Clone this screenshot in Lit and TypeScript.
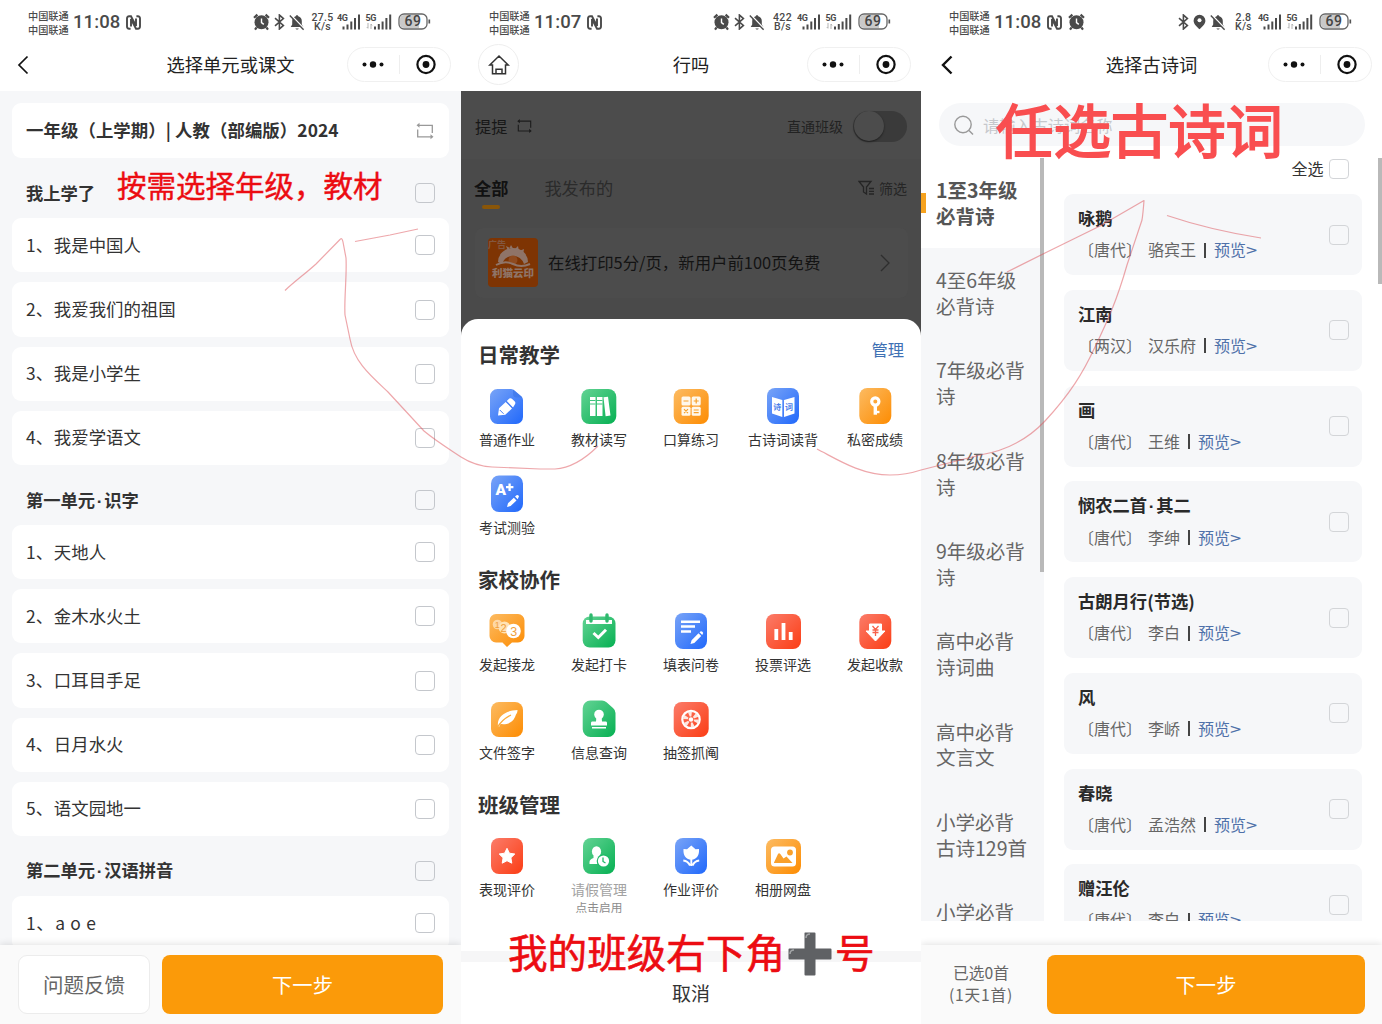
import { LitElement, html, svg, css } from "lit";
import { customElement } from "lit/decorators.js";

const alarm = html`<svg class="ic" width="17" height="18" viewBox="0 0 17 18"><circle cx="8.5" cy="9.3" r="7" fill="#4a4a4a"/><path d="M1 4.8 4.4 1.600M16 4.800 12.600 1.600M3.600 14.500 2 16.600M13.400 14.500 15 16.600" stroke="#4a4a4a" stroke-width="2.200" fill="none"/><path d="M8.500 5.600V9.600L10.800 11.400" stroke="#fff" stroke-width="1.400" fill="none"/></svg>`;
const bluetooth = html`<svg class="ic" width="11" height="16" viewBox="0 0 11 16"><path d="M1 4.2 9.4 11.4 5.4 15V1L9.4 4.6 1 11.8" stroke="#4a4a4a" stroke-width="1.6" fill="none"/></svg>`;
const muted = html`<svg class="ic" width="16" height="17" viewBox="0 0 16 17"><path d="M8 1.2c.8 0 1.2.5 1.3 1.1 2.200.6 3.500 2.400 3.500 4.600v3.600l1.500 2.500H1.700l1.500-2.500V6.900c0-2.200 1.300-4 3.500-4.600C6.800 1.700 7.200 1.200 8 1.200zM6.500 14.400h3.200c-.3 1.500-2.900 1.500-3.200 0z" fill="#4a4a4a"/><path d="M1.800 1 15.500 15.300" stroke="#fff" stroke-width="1.800"/><path d="M.8 1.400 14.600 15.800" stroke="#4a4a4a" stroke-width="1.400"/></svg>`;
const pin = html`<svg class="ic" width="13" height="16" viewBox="0 0 13 16"><path d="M6.500.8a5.900 5.900 0 0 1 5.900 5.900c0 3.600-3.700 6.400-5.900 8.500C4.300 13.100.6 10.300.6 6.700A5.900 5.900 0 0 1 6.500.8z" fill="#4a4a4a"/><circle cx="6.500" cy="6.300" r="2" fill="#fff"/></svg>`;
const nfc = html`<svg class="ic" width="15" height="15" viewBox="0 0 15 15"><path d="M4.600 13.800H3.200A2.300 2.300 0 0 1 1 11.500v-8A2.300 2.300 0 0 1 3.200 1.200H5L10 11V3.500M10.400 1.200h1.400A2.300 2.300 0 0 1 14 3.500v8a2.300 2.300 0 0 1-2.200 2.300H10L5 4v7.500" fill="none" stroke="#4a4a4a" stroke-width="1.900"/></svg>`;
const signals = html`<svg class="ic" width="55" height="18" viewBox="0 0 55 18" fill="#4a4a4a">
  <text x="0" y="8" class="net">4G</text><text x="28.500" y="8" class="net">5G</text>
  <path d="M5.500 13.500h2v3h-2zM9.500 11.500h2v5h-2zM13.300 8.500h2v8h-2zM17 5h2v11.500h-2zM21 1.500h2v15h-2zM37 13.500h2v3h-2zM40.800 11h2v5.500h-2zM44.600 8.500h2v8h-2zM48.400 5h2v11.500h-2zM52.200 1.500h2v15h-2z"/>
  <path d="M31 10v5M29.800 14l1.200 1.500M34 11v5M34 11l1 1.500" stroke="#aaa" fill="none" stroke-width=".9"/></svg>`;
const battery = html`<svg class="ic" width="33" height="18" viewBox="0 0 33 18"><rect x="1" y="1" width="28" height="15" rx="5" fill="#fff" stroke="#666" stroke-width="1.300"/><path d="M6 2H21V15H6A4 4 0 0 1 2 11V6A4 4 0 0 1 6 2z" fill="#c9c9c9"/><path d="M31.300 6.500v4" stroke="#555" stroke-width="1.700"/><text x="15" y="13.400" class="bat">69</text></svg>`;
const swap = (c: string) => html`<svg class="ic" width="20" height="20" viewBox="0 0 20 20" fill="none" stroke="${c}" stroke-width="1.300"><path d="M3 4.300H17.300V12M2.700 8.500V15.800H17"/><path d="M4.500 1.800 1.500 4.300 4.500 6.800zM15.500 13.300 18.500 15.800 15.500 18.300z" fill="${c}" stroke="none"/></svg>`;

const sq = (c: string, x: number, y: number, w: number, h: number) =>
  svg`<rect x=${x} y=${y} width=${w} height=${h} rx="8" fill="url(#${c})"/>`;

const art: Record<string, unknown> = {
  homework: svg`<path d="M10.500 3H24Q26 3 27.500 4.500L34.500 10.500Q36 12 36 14V31a7 7 0 0 1-7 7H10.500A7.500 7.500 0 0 1 3 30.500V10.500A7.500 7.500 0 0 1 10.500 3z" fill="url(#b)"/><path d="M26 3.500 35.500 11.500H29.500a3.500 3.500 0 0 1-3.500-3.500z" fill="#3f78e8" opacity=".7"/><path d="M11 29.500 12 22.300 18.700 16 25 22.400 18.300 28.700zM19.800 15 22.300 12.600Q23.800 11.600 25.200 12.900L27.800 15.600Q29 17.200 27.700 18.700L26 21.400z" fill="#fff"/><path d="M12.800 24 16.600 27.800M19.200 15.500 25.600 21.900" stroke="#4a80f5"/>`,
  books: svg`${sq("g", 2.3, 3, 35, 35)}<path d="M11 11h5.500v19H11zM18 11h5.500v19H18zM24.500 11.300 29 10.800 31.500 29.500 26.600 30.200z" fill="#fff"/><path d="M11 14.500h5.500M11 18h5.500M18 14.500h5.500M18 18h5.500" stroke="#3ec37c" stroke-width="1.200"/>`,
  calc: svg`${sq("o", 2.7, 3, 35, 35)}<g fill="#fff8ec"><rect x="10.500" y="10.500" width="9" height="9" rx="1.500"/><rect x="20.700" y="10.500" width="9" height="9" rx="1.500"/><rect x="10.500" y="20.700" width="9" height="9" rx="1.500"/><rect x="20.700" y="20.700" width="9" height="9" rx="1.500"/></g><path d="M12.500 15h5M22.700 15h5M25.200 12.500v5M13 23.200l4 4M17 23.200l-4 4M22.700 24h5M22.700 26.700h5" stroke="#f5a02c" stroke-width="1.200"/>`,
  poem: svg`${sq("b", 4, 2, 32, 36)}<path d="M9 11 19.300 14V31L9 27.500zM31.500 11 21 14V31L31.500 27.500z" fill="#fff"/><text x="10.300" y="24" class="gl" font-size="8">诗</text><text x="22" y="24" class="gl" font-size="8">词</text>`,
  key: svg`${sq("o", 4.3, 2, 32, 36)}<circle cx="20.300" cy="15.500" r="3.600" fill="none" stroke="#fff" stroke-width="3.200"/><path d="M20.300 19V28.700" stroke="#fff" stroke-width="3.400"/><path d="M21 26H24.500" stroke="#fff" stroke-width="2.400"/>`,
  exam: svg`${sq("b", 4, 1.5, 32, 36.5)}<text x="8.500" y="20.500" class="ap" font-size="15.500">A</text><path d="M22.600 9.500V17M19 13.200H26.400" stroke="#fff" stroke-width="2.300"/><path d="M20 33 21 29.200 26.800 23.700 29.500 26.500 23.600 32zM28 22.500 29.500 21.200Q31 20.600 32 22.300L30.700 25.300z" fill="#fff"/>`,
  chain: svg`<path d="M9 3H31a6.500 6.500 0 0 1 6.500 6.500V25a6.500 6.500 0 0 1-6.500 6.500H25L20 36 15.500 31.500H9A6.500 6.500 0 0 1 2.500 25V9.500A6.500 6.500 0 0 1 9 3z" fill="url(#o)"/><circle cx="10.500" cy="13.500" r="4.800" fill="#fff" opacity=".5"/><circle cx="17.500" cy="16.500" r="6" fill="#ffe3b5"/><circle cx="26.500" cy="20" r="7.300" fill="#fff"/><text x="7.800" y="17" class="num" font-size="9">1</text><text x="13.500" y="21" class="num" font-size="11">2</text><text x="23.200" y="24.700" class="num" font-size="12.500">3</text>`,
  clock: svg`<rect x="3.700" y="5.500" width="32.800" height="31" rx="7" fill="url(#g)"/><rect x="7" y="9" width="26" height="4" fill="#fff"/><path d="M12 4v6M28 4v6" stroke="#2fb96e" stroke-width="3.400" stroke-linecap="round"/><path d="M14.500 22 19.300 26.500 27 18.800" fill="none" stroke="#fff" stroke-width="3"/>`,
  form: svg`${sq("b", 4, 2, 32, 36)}<path d="M10 10.700H29M10 15.500H24M10 20.500H20" stroke="#fff" stroke-width="2.600"/><path d="M19.500 33 20.600 29.200 27.500 22.300 30.200 25 23.300 32zM28.500 21.300 29.800 20.200Q31.700 20 32.200 22L31.200 24z" fill="#fff"/>`,
  vote: svg`${sq("r", 3, 3, 35, 35)}<path d="M13.300 18V29M20.500 12V29M27.700 21V29" stroke="#fff" stroke-width="3.800"/>`,
  pay: svg`${sq("r", 4.3, 3, 32, 35)}<path d="M14.500 13H26.500V20H30L20.500 30 11 20H14.500z" fill="#fff" stroke="#fff" stroke-linejoin="round"/><path d="M17.500 15 20.500 18.500 23.500 15M17.500 19h6M17.500 21.500h6M20.500 18.500V25" fill="none" stroke="#f7604a" stroke-width="1.300"/>`,
  sign: svg`${sq("o", 4, 3, 32, 35)}<path d="M11 27.500C9.500 17 19 11.500 30.500 11 30.500 13 30 14 29 15.500L28 18C25 25 18.500 25.500 13.500 25L12 28z" fill="#fff"/><path d="M10.500 28.500C13 23.500 18 19 24 16" stroke="#fbab3a" stroke-width="1.200" fill="none"/>`,
  stamp: svg`<path d="M11.500 1.500H23Q25.500 1.500 27.500 3.300L34 9Q36.500 11 36.500 14V30.500a7.500 7.500 0 0 1-7.500 7.500H11.500A7.800 7.800 0 0 1 3.700 30.200V9.300A7.800 7.800 0 0 1 11.500 1.500z" fill="url(#g)"/><circle cx="20" cy="15.500" r="4.800" fill="#fff"/><path d="M17.500 17H22.500L23 22.500H27Q28 22.500 28 24V26.500H12V24Q12 22.500 13 22.500H17zM13 28H27V29.500H13z" fill="#fff"/>`,
  draw: svg`${sq("r", 2.7, 3, 35, 35)}<circle cx="20" cy="20.500" r="8.700" fill="none" stroke="#fff" stroke-width="2.200"/><circle cx="20" cy="20.500" r="5.500" fill="none" stroke="#fde6e0" stroke-width="5" stroke-dasharray="2.900 2.860"/><circle cx="20" cy="20.500" r="2.200" fill="#fff"/>`,
  star: svg`${sq("r", 4, 2, 32, 36)}<path d="M20 12.300 22.400 17.200 27.800 18 23.900 21.800 24.800 27.200 20 24.700 15.200 27.200 16.100 21.800 12.200 18 17.600 17.200z" fill="#fff" stroke="#fff" stroke-linejoin="round"/>`,
  leave: svg`${sq("g", 4, 2, 32, 36)}<ellipse cx="17.500" cy="15.500" rx="4.600" ry="5.300" fill="#fff"/><path d="M14.500 20H20.500V28H10.500V26Q10.500 23.500 14.500 22z" fill="#fff"/><circle cx="24.500" cy="25" r="6.800" fill="#1fb968"/><circle cx="24.500" cy="25" r="5.600" fill="#fff"/><path d="M24 21.500V25.500L26.500 27" stroke="#1fb968" stroke-width="1.300" fill="none"/>`,
  flower: svg`${sq("b", 4, 2, 32, 36)}<path d="M12.500 13 16 13.300 20.300 9.500 24.500 13.300 28 13C28.500 19 26 23.300 20.300 23.800 14.500 23.300 12 19 12.500 13z" fill="#fff"/><path d="M20.300 23V30M12.300 24.500Q17 25 19 29.500M28.200 24.500Q23.500 25 21.500 29.500" stroke="#fff" stroke-width="1.900" fill="none"/>`,
  album: svg`${sq("o", 3, 3, 35, 35)}<rect x="8" y="10.500" width="25" height="20" rx="3.500" fill="#fff"/><path d="M11 26.500 15 18Q16 16.500 17.300 18L20.500 22.500 23.500 20.500 29.500 27H11z" fill="#f9a02b"/><circle cx="27" cy="16.500" r="2.900" fill="#f9a02b"/>`,
};

type Tool = [string, string, string?];
const groups: { title: string; tools: Tool[] }[] = [
  { title: "日常教学", tools: [["homework", "普通作业"], ["books", "教材读写"], ["calc", "口算练习"], ["poem", "古诗词读背"], ["key", "私密成绩"], ["exam", "考试测验"]] },
  { title: "家校协作", tools: [["chain", "发起接龙"], ["clock", "发起打卡"], ["form", "填表问卷"], ["vote", "投票评选"], ["pay", "发起收款"], ["sign", "文件签字"], ["stamp", "信息查询"], ["draw", "抽签抓阄"]] },
  { title: "班级管理", tools: [["star", "表现评价"], ["leave", "请假管理", "点击启用"], ["flower", "作业评价"], ["album", "相册网盘"]] },
];
const units = [
  { title: "我上学了", lessons: ["我是中国人", "我爱我们的祖国", "我是小学生", "我爱学语文"] },
  { title: "第一单元·识字", lessons: ["天地人", "金木水火土", "口耳目手足", "日月水火", "语文园地一"] },
  { title: "第二单元·汉语拼音", lessons: ["a o e"] },
];
const cats = [["1至3年级", "必背诗"], ["4至6年级", "必背诗"], ["7年级必背", "诗"], ["8年级必背", "诗"], ["9年级必背", "诗"], ["高中必背", "诗词曲"], ["高中必背", "文言文"], ["小学必背", "古诗129首"], ["小学必背", "古诗"]];
const poems = [["咏鹅", "唐代", "骆宾王"], ["江南", "两汉", "汉乐府"], ["画", "唐代", "王维"], ["悯农二首·其二", "唐代", "李绅"], ["古朗月行(节选)", "唐代", "李白"], ["风", "唐代", "李峤"], ["春晓", "唐代", "孟浩然"], ["赠汪伦", "唐代", "李白"]];

/** Sets the middle dot of a title in a narrow Latin face instead of the full-width one. */
const dotted = (s: string) => {
  const [a, b] = s.split("·");
  return b ? html`${a}<span class="dot">·</span>${b}` : a;
};

@customElement("app-root")
export class AppRoot extends LitElement {
  static styles = css`
    :host { display: block; position: relative; width: 1382px; height: 1024px; overflow: hidden; background: #fff; color: #333; font-family: "Noto Sans CJK SC", sans-serif; }
    * { box-sizing: border-box; }
    .defs { position: absolute; width: 0; height: 0; }
    .phones { display: grid; grid-template-columns: 461px 460px 461px; height: 1024px; }
    .phone { display: flex; flex-direction: column; height: 1024px; overflow: hidden; white-space: nowrap; }
    .ic { display: block; flex: none; }
    .status { display: flex; align-items: center; height: 43px; flex: none; padding: 1px 30px 0 28px; color: #4a4a4a; }
    .carrier { font-size: 10.200px; line-height: 14px; width: 45px; font-weight: 500; padding-top: 1px; }
    .time { font: 500 18.500px/22px Roboto, sans-serif; letter-spacing: .1px; width: 53px; }
    .status .extra { margin-left: 6px; }
    .sysicons { display: flex; align-items: center; margin-left: auto; gap: 4px; }
    .speed { width: 27px; text-align: center; font: 500 10.500px/9.500px Roboto, sans-serif; letter-spacing: .3px; margin: 0 -3px 0 0; }
    .signals { margin-right: 2px; }
    .net { font: 700 9px Roboto, sans-serif; letter-spacing: -.4px; }
    .bat { font: 500 14px Roboto, sans-serif; text-anchor: middle; fill: #444; letter-spacing: .5px; }
    .nav { display: grid; grid-template-columns: 115px 1fr 115px; align-items: center; height: 48px; flex: none; padding-bottom: 5px; }
    .title { text-align: center; font-size: 18.300px; line-height: 26px; color: #222; padding-bottom: 2px; }
    .back { margin-left: 17px; }
    .home { margin-left: 17px; width: 41px; height: 41px; border: 1px solid #eee; border-radius: 50%; display: grid; place-items: center; }
    .capsule { width: 104px; height: 35px; border: 1px solid #f0f0f0; border-radius: 18px; display: flex; align-items: center; margin-left: .6px; }
    .capsule svg { display: block; }
    .body { flex: 1; min-height: 0; overflow: hidden; background: #f6f7f9; padding: 12.300px 12px 0; }
    .card { display: flex; align-items: center; justify-content: space-between; background: #fff; border-radius: 9px; height: 54.200px; margin-bottom: 10px; padding: 0 14px; font-size: 17.400px; }
    .card > span, .unit > span { padding-bottom: 2px; }
    .dot { display: inline-block; width: 9px; text-align: center; font-family: "Liberation Sans", sans-serif; }
    .num1 { margin-right: .8px; }
    .latin { letter-spacing: .7px; }
    .book { height: 55px; font-weight: 700; letter-spacing: .08px; }
    .unit { display: flex; align-items: center; justify-content: space-between; height: 50px; padding: 0 14px; font-size: 17.300px; font-weight: 700; }
    .box { width: 20px; height: 20px; border: 1px solid #c4c7cc; border-radius: 4px; flex: none; }
    .foot { position: relative; display: flex; height: 79px; flex: none; background: #fafafa; box-shadow: 0 -1px 7px rgba(0,0,0,.12); padding: 10px 18px 10px; }
    .feedback { width: 132px; height: 59px; background: #fff; border: 1px solid #ececec; border-radius: 9px; display: grid; place-items: center; font-size: 20.500px; color: #666; margin-right: 12px; padding-bottom: 2px; }
    .next { flex: 1; height: 59px; background: #fb9a09; border-radius: 8px; display: grid; place-items: center; color: #fff; font-size: 20.300px; padding-bottom: 2px; }
    .dim { flex: 1; display: flex; flex-direction: column; background: #4a4a4a; }
    .who { display: flex; align-items: center; height: 68px; background: #4c4c4c; padding: 2px 14px 0; font-size: 16.200px; color: #171717; flex: none; }
    .who .ic { margin-left: 9px; width: 17px; }
    .direct { margin-left: auto; font-size: 14px; color: #222; }
    .toggle { width: 54px; height: 31px; border-radius: 16px; background: #3a3a3a; margin-left: 10px; padding: .5px; }
    .knob { display: block; width: 30px; height: 30px; border-radius: 50%; background: #4c4c4c; box-shadow: 0 1px 2px rgba(0,0,0,.5); }
    .tabs { display: flex; align-items: flex-start; height: 69px; flex: none; padding: 16px 14px 0 13px; font-size: 17.200px; line-height: 26px; color: #2b2b2b; }
    .on { font-weight: 700; color: #111; margin-right: 36px; }
    .on i { display: block; width: 18px; height: 4px; border-radius: 2px; background: #8a5608; margin: 4px auto 0; }
    .filter { margin-left: auto; display: flex; align-items: center; gap: 4px; font-size: 14px; color: #252525; }
    .ad { display: flex; align-items: center; height: 70px; flex: none; margin: 0 13px 0 14px; background: #4c4c4c; border-radius: 8px; padding: 0 17px 0 13px; font-size: 16.400px; color: #131313; }
    .ad > span { padding-bottom: 2px; }
    .ad .go { margin-left: auto; }
    .logo { margin-right: 10px; }
    .adtag { font: 700 9px "Noto Sans CJK SC", sans-serif; fill: #83573f; }
    .adname { font: 900 10.500px "Noto Sans CJK SC", sans-serif; fill: #8f7468; }
    .sheet { display: flex; flex-direction: column; height: 705px; margin-top: 21px; background: #fff; border-radius: 17px 17px 0 0; padding-top: 17px; flex: none; }
    .gtitle { display: flex; justify-content: space-between; height: 50px; padding: 0 17px; font-size: 20.500px; font-weight: 700; line-height: 37px; }
    .manage { font-size: 16.300px; font-weight: 400; line-height: 26px; color: #3e70b4; }
    .tools { display: grid; grid-template-columns: repeat(5, 92px); grid-auto-rows: 87.500px; }
    .tool { display: flex; flex-direction: column; align-items: center; font-size: 14px; line-height: 20px; }
    .tool svg { display: block; margin-bottom: 3px; }
    .off { color: #a2a2a2; }
    .sub { font-size: 11.700px; line-height: 15px; color: #8c8c8c; }
    .band { height: 11px; background: #f6f6f7; margin-top: auto; }
    .cancel { height: 62px; text-align: center; font-size: 19px; line-height: 62px; }
    .gl { font-family: "Noto Sans CJK SC", sans-serif; font-weight: 700; fill: #4d7fea; }
    .ap { font-family: Roboto, sans-serif; font-weight: 900; fill: #fff; }
    .num { font-family: "Liberation Sans", sans-serif; fill: #f0a03c; }
    .search { display: flex; align-items: center; gap: 8px; margin: 12px 17px 0 18px; height: 43px; flex: none; border-radius: 22px; background: #f6f7f9; padding-left: 14px; font-size: 16.200px; color: #c6c8cc; }
    .split { display: flex; height: 763px; margin-top: 12px; flex: none; overflow: hidden; }
    .cats { position: relative; width: 123px; flex: none; background: #f6f7f9; }
    .cat { display: flex; align-items: center; height: 90.300px; padding: 0 0 1px 15px; font-size: 19.500px; line-height: 25.800px; color: #666; }
    .sel { background: #fff; font-weight: 700; color: #555; }
    .mark { position: absolute; left: 0; top: 35px; width: 5px; height: 20px; background: #f6a21e; }
    .bar { position: absolute; top: 0; right: 0; width: 4px; background: #b9b9b9; }
    .b1 { height: 414px; } .b2 { height: 126px; }
    .list { position: relative; flex: 1; padding: 0 20px; }
    .list .box { border-color: #d3d5d8; margin-right: .5px; }
    .all { display: flex; align-items: center; justify-content: flex-end; gap: 5px; height: 21px; margin-bottom: 15.200px; padding-right: 13px; font-size: 16px; }
    .all > span { padding-bottom: 2px; }
    .poem { display: flex; align-items: center; justify-content: space-between; height: 81px; margin-bottom: 14.750px; border-radius: 9px; background: #f6f7f9; padding: 0 13px 0 14px; }
    .pt { font-size: 17.300px; line-height: 24px; font-weight: 700; color: #2a2a2a; margin-bottom: 7px; }
    .pm { font-size: 16px; line-height: 24px; color: #666; display: flex; align-items: center; padding-bottom: 2px; }
    .who2 { margin-left: 6px; }
    .pm i { width: 2px; height: 15px; background: #444; margin: 2px 8px 0; }
    .pm b { font-weight: 400; color: #4f71a9; }
    .gt { display: inline-block; transform: scaleX(1.25); transform-origin: 0 50%; }
    .rest { flex: 1; }
    .count { width: 90px; text-align: center; font-size: 15.700px; line-height: 21.500px; color: #666; padding-top: 7px; }
    .wide { letter-spacing: .8px; }
    .foot3 { padding-left: 15px; padding-right: 17px; } .foot3 .count { margin-right: 21px; }
    .ink { position: absolute; left: 0; top: 0; pointer-events: none; }
    .note { position: absolute; white-space: nowrap; display: flex; align-items: center; color: #ec0c12; }
    .n1 { left: 117px; top: 162px; font-size: 29.500px; line-height: 44px; -webkit-text-stroke: .4px #ec0c12; }
    .n2 { left: 508px; top: 922px; font-size: 39.600px; line-height: 58px; -webkit-text-stroke: .6px #ec0c12; }
    .n3 { left: 996px; top: 85px; font-size: 57.400px; line-height: 86px; color: #f94e50; -webkit-text-stroke: 1.800px #f94e50; }
    .n2 svg { margin: 6px 3px 0; }
  `;

  status(time: string, a: string, b: string, third = false) {
    return html`<div class="status"><div class="carrier">中国联通<br />中国联通</div><div class="time">${time}</div>${nfc}${third ? html`<span class="extra">${alarm}</span>` : ""}
      <div class="sysicons">${third ? html`${bluetooth}${pin}${muted}` : html`${alarm}${bluetooth}${muted}`}<div class="speed">${a}<br />${b}</div><span class="signals">${signals}</span>${battery}</div></div>`;
  }
  nav(title: string, left: unknown) {
    return html`<div class="nav"><div>${left}</div><div class="title">${title}</div><div class="capsule"><svg width="102" height="33" viewBox="0 0 102 33"><g fill="#111"><circle cx="16.500" cy="16.500" r="2"/><circle cx="25" cy="16.500" r="3.200"/><circle cx="33.500" cy="16.500" r="2"/><circle cx="78" cy="16.500" r="3.400"/></g><circle cx="78" cy="16.500" r="8.600" fill="none" stroke="#111" stroke-width="2.200"/><path d="M51.500 7V26" stroke="#eee"/></svg></div></div>`;
  }
  back(w: number, x: number) {
    return html`<svg class="ic back" width="20" height="22" viewBox="0 0 20 22"><path d="M${10.5 + x} 2.500 ${2 + x} 11 ${10.5 + x} 19.500" fill="none" stroke="#111" stroke-width=${w}/></svg>`;
  }
  render() {
    const grad = (id: string, a: string, b: string) => svg`<linearGradient id=${id} x1="0" y1="0" x2="1" y2="1"><stop offset="0" stop-color=${a}/><stop offset="1" stop-color=${b}/></linearGradient>`;
    return html`
      <svg class="defs"><defs>${grad("b", "#79a4f7", "#2068fb")}${grad("g", "#63d394", "#06b052")}${grad("o", "#fcbb62", "#fd8c02")}${grad("r", "#fb7c6a", "#fb3d14")}</defs></svg>
      <div class="phones">
        <section class="phone">
          ${this.status("11:08", "27.5", "K/s")}${this.nav("选择单元或课文", this.back(1.7, 0))}
          <div class="body">
            <div class="card book"><span>一年级（上学期）| 人教（部编版）2024</span>${swap("#999")}</div>
            ${units.map((u) => html`<div class="unit"><span>${dotted(u.title)}</span><i class="box"></i></div>${u.lessons.map((l, i) => html`<div class="card"><span class=${l[0] === "a" ? "latin" : ""}><span class="num1">${i + 1}、</span>${l}</span><i class="box"></i></div>`)}`)}
          </div>
          <div class="foot"><div class="feedback">问题反馈</div><div class="next">下一步</div></div>
        </section>
        <section class="phone">
          ${this.status("11:07", "422", "B/s")}${this.nav("行吗", html`<div class="home"><svg width="22" height="22" viewBox="0 0 22 22" fill="none" stroke="#333" stroke-width="1.500"><path d="M1.800 11 11 2 20.200 11H17.500V19.800H4.500V11zM8 19.800V15.300H14V19.800"/></svg></div>`)}
          <div class="dim">
            <div class="who">提提${swap("#1c1c1c")}<span class="direct">直通班级</span><span class="toggle"><i class="knob"></i></span></div>
            <div class="tabs"><span class="on">全部<i></i></span><span>我发布的</span><span class="filter"><svg width="17" height="16" viewBox="0 0 17 16" fill="none" stroke="#252525" stroke-width="1.300"><path d="M1 1.500H13L8.500 7V14L5.500 12V7zM11 8.500H16M11 11.300H16M11 14H16"/></svg>筛选</span></div>
            <div class="ad"><svg class="ic logo" width="50" height="50" viewBox="0 0 50 50"><rect width="50" height="49" rx="4" fill="#7e3403"/><path d="M10 24A15 14 0 0 1 40 24L36 26Q33 18 25 18T14 26z" fill="#8f7468"/><path d="M18 8 20 13 23 7 26 12 30 8 31 13 36 11 35 17z" fill="#8f7468"/><circle cx="25" cy="22" r="4.500" fill="#8f4b20"/><path d="M8 27Q17 22 25 26T42 26" stroke="#8f7468" stroke-width="2" fill="none"/><text x="0" y="10" class="adtag">广告</text><text x="4" y="39" class="adname">利猫云印</text></svg><span>在线打印5分/页，新用户前100页免费</span><svg class="go" width="12" height="20" viewBox="0 0 12 20"><path d="M2 2 10 10 2 18" fill="none" stroke="#2e2e2e" stroke-width="1.300"/></svg></div>
            <div class="sheet">
              ${groups.map((g, i) => html`<div class="gtitle"><span>${g.title}</span>${i === 0 ? html`<span class="manage">管理</span>` : ""}</div>
                <div class="tools">${g.tools.map(([k, n, s]) => html`<div class="tool ${s ? "off" : ""}"><svg width="40" height="40" viewBox="0 0 40 40">${art[k]}</svg><span>${n}</span>${s ? html`<span class="sub">${s}</span>` : ""}</div>`)}</div>`)}
              <div class="band"></div><div class="cancel">取消</div>
            </div>
          </div>
        </section>
        <section class="phone">
          ${this.status("11:08", "2.8", "K/s", true)}${this.nav("选择古诗词", this.back(2.4, 3))}
          <div class="search"><svg width="22" height="22" viewBox="0 0 22 22" fill="none" stroke="#999" stroke-width="1.400"><circle cx="10" cy="10.500" r="8.200"/><path d="M16 16.500 20 20.500"/></svg>请输入古诗词名称</div>
          <div class="split">
            <div class="cats">${cats.map((c, i) => html`<div class="cat ${i === 0 ? "sel" : ""}"><span>${c[0]}<br />${c[1]}</span></div>`)}<i class="mark"></i><i class="bar b1"></i></div>
            <div class="list"><div class="all"><span>全选</span><i class="box"></i></div>
              ${poems.map((p) => html`<div class="poem"><div><div class="pt">${dotted(p[0])}</div><div class="pm">〔${p[1]}〕<span class="who2">${p[2]}</span><i></i><b>预览<span class="gt">&gt;</span></b></div></div><i class="box"></i></div>`)}
              <i class="bar b2"></i></div>
          </div>
          <div class="rest"></div>
          <div class="foot foot3"><div class="count">已选0首<br /><span class="wide">(1天1首)</span></div><div class="next">下一步</div></div>
        </section>
      </div>
      <svg class="ink" width="1382" height="1024" viewBox="0 0 1382 1024" fill="none" stroke="#de5058" stroke-opacity=".5" stroke-width="1.200" stroke-linejoin="round">
        <path d="M285 290.500C295 281 305 274 316 264L340 239.500Q342 237 343 242L346 258C347 275 344 300 345 315L350 339C354 362 371 376 388 392L424 431C436 441 449 449 461 457Q475 466 492 467L540 469H555C572 468 586 458 598 446M355 241.500 390 235 418 229"/>
        <path d="M817 449C835 458 860 475 890 475Q906 475 921 470L980 455C1010 450 1030 437 1045 421C1070 394 1083 373 1095 347C1108 320 1117 300 1127 265L1142 220Q1143 214 1144 200.500L1100 226 1045 253 1007 272M1167 215.500Q1210 230 1261 238"/>
      </svg>
      <div class="note n1">按需选择年级，教材</div>
      <div class="note n2">我的班级右下角<svg width="44" height="44" viewBox="0 0 44 44"><path d="M16.500 1Q16.500 .5 17 .5H26.500Q27.500.5 27.500 1.500V16.500H42.500Q43.500 16.500 43.500 17.500V26.500Q43.500 27.500 42.500 27.500H27.500V42.500Q27.500 43.500 26.500 43.500H17.500Q16.500 43.500 16.500 42.500V27.500H1.500Q.5 27.500.5 26.500V17.500Q.5 16.500 1.500 16.500H16.500z" fill="#5f6164"/><path d="M18 6Q18 2 22 2M2 22Q2 18 6 18" stroke="#a4a6a8" stroke-width="1.500" fill="none"/></svg>号</div>
      <div class="note n3">任选古诗词</div>`;
  }
}
